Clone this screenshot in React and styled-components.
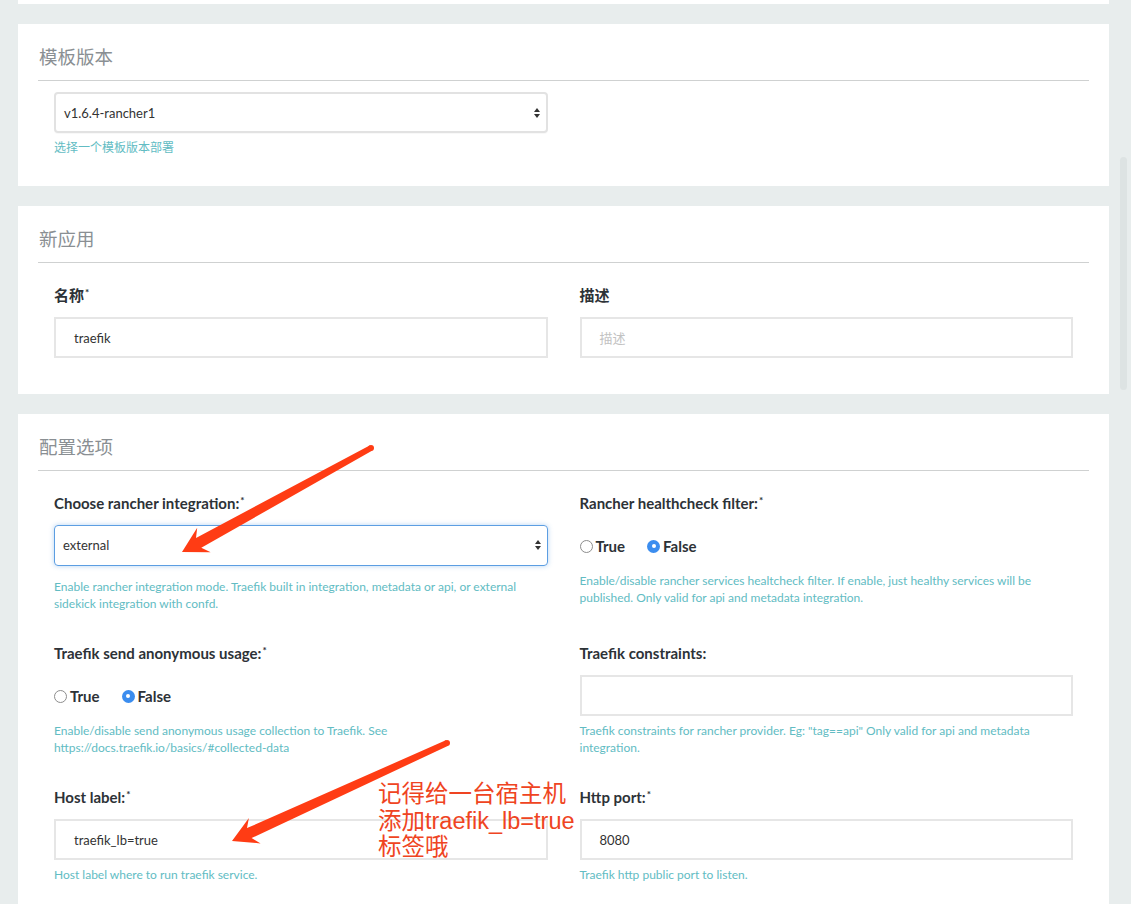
import styled, { createGlobalStyle } from "styled-components";

const GlobalStyle = createGlobalStyle`
  html, body {
    margin: 0;
    padding: 0;
    height: 904px;
    overflow: hidden;
    background: #e8eded;
    font-family: Lato, "Noto Sans CJK SC", sans-serif;
  }
`;

const Page = styled.div`
  position: relative;
  display: flex;
  flex-direction: column;
  gap: 20px;
  padding: 0 22px 0 18px;
  height: 904px;
  overflow: hidden;
`;

const CardTail = styled.div`
  height: 4px;
  flex-shrink: 0;
  background: #fff;
`;

const Card = styled.section`
  background: #fff;
  padding: 20px 20px ${(p) => p.$pb || 30}px;
  flex-shrink: 0;
`;

const CardTitle = styled.h4`
  margin: 0;
  padding: 0 0 10px 1px;
  border-bottom: 1px solid #cfd1d1;
  font-size: 18.5px;
  line-height: 26px;
  font-weight: 400;
  color: #8a8f93;
`;

const FormGrid = styled.div`
  display: grid;
  grid-template-columns: 1fr 1fr;
  row-gap: 31px;
  padding-top: ${(p) => p.$pt}px;
`;

const Col = styled.div`
  padding: 0 16px;
  min-width: 0;
`;

const Label = styled.div`
  font-size: 15px;
  line-height: 20px;
  font-weight: 700;
  color: #2d3237;
  margin-bottom: 12px;
`;

const Req = styled.span`
  font-size: 10px;
  vertical-align: top;
  line-height: 14px;
  margin-left: 1px;
`;

const TextInput = styled.div`
  box-sizing: border-box;
  height: 41px;
  border: 2px solid #e6e6e6;
  padding: 0 18px;
  display: flex;
  align-items: center;
  font-size: 13px;
  color: ${(p) => (p.$placeholder ? "#c2c2c2" : "#333")};
`;

const SelectBox = styled.div`
  box-sizing: border-box;
  height: 41px;
  border: ${(p) => (p.$focus ? "1.5px solid #5c9ee2" : "2px solid #e2e2e2")};
  box-shadow: ${(p) =>
    p.$focus ? "0 0 5px rgba(92,158,226,0.45)" : "0 1px 1px rgba(0,0,0,0.03)"};
  border-radius: 4px;
  padding: 0 5px 0 8px;
  display: flex;
  align-items: center;
  justify-content: space-between;
  font-size: 13px;
  color: #333;
`;

const Help = styled.div`
  margin-top: ${(p) => p.$mt ?? 6}px;
  font-size: 12px;
  line-height: 17px;
  color: #62bcc3;
`;

const RadioRow = styled.div`
  display: flex;
  align-items: center;
  gap: 22px;
  margin-top: 23.5px;
  height: 20px;
`;

const RadioOption = styled.label`
  display: flex;
  align-items: center;
  gap: 3px;
  font-size: 15px;
  font-weight: 700;
  color: #2d3237;
`;

const RadioDot = styled.span`
  box-sizing: border-box;
  width: 13px;
  height: 13px;
  border-radius: 50%;
  display: inline-flex;
  align-items: center;
  justify-content: center;
  border: ${(p) => (p.$on ? "none" : "1px solid #8d8d8d")};
  background: ${(p) => (p.$on ? "#3b8def" : "#fff")};
  &::after {
    content: "";
    display: ${(p) => (p.$on ? "block" : "none")};
    width: 4px;
    height: 4px;
    border-radius: 50%;
    background: #fff;
  }
`;

const Overlay = styled.svg`
  position: absolute;
  left: 0;
  top: 0;
  pointer-events: none;
`;

const Note = styled.div`
  position: absolute;
  left: 378px;
  top: 781px;
  font-family: "Liberation Sans", "Noto Sans CJK SC", sans-serif;
  font-size: 23.5px;
  line-height: 26.5px;
  color: #ef4422;
  white-space: nowrap;
`;

const ScrollThumb = styled.div`
  position: absolute;
  left: 1120px;
  top: 157px;
  width: 7px;
  height: 233px;
  border-radius: 4px;
  background: #dde3e3;
`;

function SelectArrows() {
  return (
    <svg width="8" height="12" viewBox="0 0 8 12">
      <path d="M4 1 L7 5 L1 5 Z" fill="#333" />
      <path d="M4 11 L7 7 L1 7 Z" fill="#333" />
    </svg>
  );
}

function Radios({ value }) {
  return (
    <RadioRow>
      <RadioOption>
        <RadioDot $on={value === true} />
        True
      </RadioOption>
      <RadioOption>
        <RadioDot $on={value === false} />
        False
      </RadioOption>
    </RadioRow>
  );
}

// tapered arrow, tail -> tip
function arrowPath([tx, ty], [hx, hy]) {
  const dx = hx - tx;
  const dy = hy - ty;
  const len = Math.hypot(dx, dy);
  const ux = dx / len;
  const uy = dy / len;
  const nx = -uy;
  const ny = ux;
  const pt = (d, w) => [hx - ux * d + nx * w, hy - uy * d + ny * w];
  const pts = [
    pt(len, 3),
    pt(19, 5.5),
    pt(25, 14),
    [hx, hy],
    pt(25, -14),
    pt(19, -5.5),
    pt(len, -3),
  ];
  return pts.map((p) => p.map((v) => v.toFixed(1)).join(",")).join(" ");
}

const arrows = [
  { from: [371, 448], to: [182, 552] },
  { from: [447, 743], to: [232, 841] },
];

export default function App() {
  return (
    <>
      <GlobalStyle />
      <Page>
        <CardTail />

        <Card $pb={30}>
          <CardTitle>模板版本</CardTitle>
          <FormGrid $pt={11}>
            <Col>
              <SelectBox>
                v1.6.4-rancher1
                <SelectArrows />
              </SelectBox>
              <Help>选择一个模板版本部署</Help>
            </Col>
          </FormGrid>
        </Card>

        <Card $pb={36}>
          <CardTitle>新应用</CardTitle>
          <FormGrid $pt={22}>
            <Col>
              <Label>
                名称<Req>*</Req>
              </Label>
              <TextInput>traefik</TextInput>
            </Col>
            <Col>
              <Label>描述</Label>
              <TextInput $placeholder>描述</TextInput>
            </Col>
          </FormGrid>
        </Card>

        <Card $pb={40}>
          <CardTitle>配置选项</CardTitle>
          <FormGrid $pt={21.5}>
            <Col>
              <Label>
                Choose rancher integration:<Req>*</Req>
              </Label>
              <SelectBox $focus>
                external
                <SelectArrows />
              </SelectBox>
              <Help $mt={12}>
                Enable rancher integration mode. Traefik built in integration,
                metadata or api, or external sidekick integration with confd.
              </Help>
            </Col>
            <Col>
              <Label>
                Rancher healthcheck filter:<Req>*</Req>
              </Label>
              <Radios value={false} />
              <Help $mt={15.5}>
                Enable/disable rancher services healtcheck filter. If enable,
                just healthy services will be published. Only valid for api and
                metadata integration.
              </Help>
            </Col>

            <Col>
              <Label>
                Traefik send anonymous usage:<Req>*</Req>
              </Label>
              <Radios value={false} />
              <Help $mt={16}>
                Enable/disable send anonymous usage collection to Traefik. See
                https://docs.traefik.io/basics/#collected-data
              </Help>
            </Col>
            <Col>
              <Label>Traefik constraints:</Label>
              <TextInput />
              <Help>
                Traefik constraints for rancher provider. Eg: "tag==api" Only
                valid for api and metadata integration.
              </Help>
            </Col>

            <Col>
              <Label>
                Host label:<Req>*</Req>
              </Label>
              <TextInput>traefik_lb=true</TextInput>
              <Help>Host label where to run traefik service.</Help>
            </Col>
            <Col>
              <Label>
                Http port:<Req>*</Req>
              </Label>
              <TextInput>8080</TextInput>
              <Help>Traefik http public port to listen.</Help>
            </Col>
          </FormGrid>
        </Card>

        <Overlay width="1131" height="904" viewBox="0 0 1131 904">
          {arrows.map((a, i) => (
            <g key={i} fill="#ff3c14">
              <polygon points={arrowPath(a.from, a.to)} />
              <circle cx={a.from[0]} cy={a.from[1]} r="3" />
            </g>
          ))}
        </Overlay>

        <Note>
          记得给一台宿主机
          <br />
          添加traefik_lb=true
          <br />
          标签哦
        </Note>

        <ScrollThumb />
      </Page>
    </>
  );
}
